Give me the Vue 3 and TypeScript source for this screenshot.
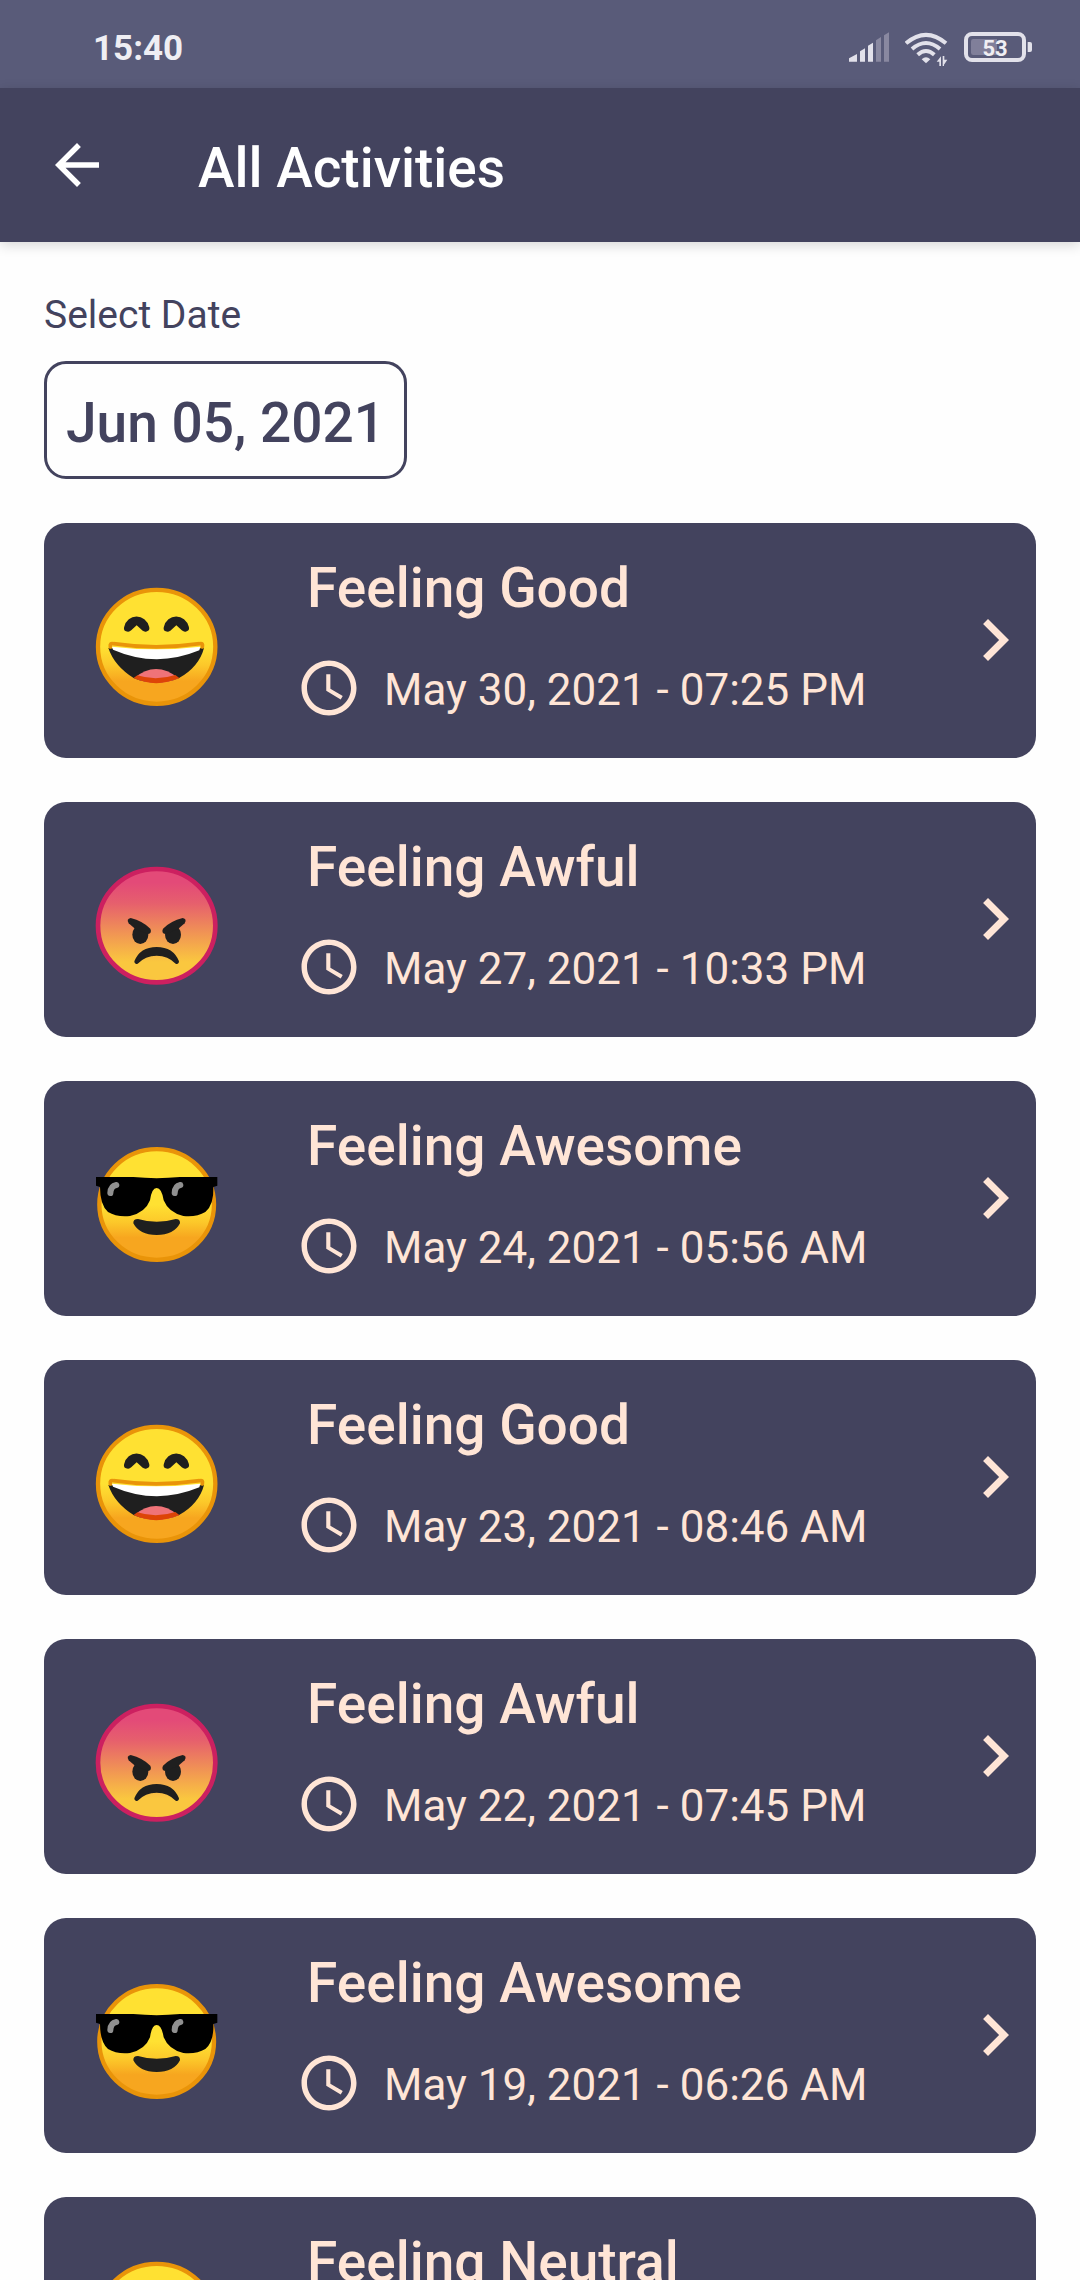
<script setup lang="ts">
type Mood = 'good' | 'awful' | 'awesome' | 'neutral'

interface Activity {
  mood: Mood
  title: string
  time: string
}

const selectedDate = 'Jun 05, 2021'

const activities: Activity[] = [
  { mood: 'good', title: 'Feeling Good', time: 'May 30, 2021 - 07:25 PM' },
  { mood: 'awful', title: 'Feeling Awful', time: 'May 27, 2021 - 10:33 PM' },
  { mood: 'awesome', title: 'Feeling Awesome', time: 'May 24, 2021 - 05:56 AM' },
  { mood: 'good', title: 'Feeling Good', time: 'May 23, 2021 - 08:46 AM' },
  { mood: 'awful', title: 'Feeling Awful', time: 'May 22, 2021 - 07:45 PM' },
  { mood: 'awesome', title: 'Feeling Awesome', time: 'May 19, 2021 - 06:26 AM' },
  { mood: 'neutral', title: 'Feeling Neutral', time: '' },
]
</script>

<template>
  <div class="app">
    <svg class="defs" width="0" height="0" aria-hidden="true">
      <defs>
        <linearGradient id="face-yellow" x1="0" y1="0" x2="0" y2="1">
          <stop offset="0.5" stop-color="#ffe132" />
          <stop offset="0.66" stop-color="#fcc82a" />
          <stop offset="0.8" stop-color="#f7a61f" />
        </linearGradient>
        <linearGradient id="face-red" x1="0" y1="0" x2="0" y2="1">
          <stop offset="0.12" stop-color="#e34a78" />
          <stop offset="0.3" stop-color="#e65f6d" />
          <stop offset="0.6" stop-color="#f29b51" />
          <stop offset="0.82" stop-color="#fac73f" />
        </linearGradient>
      </defs>
    </svg>

    <div class="status">
      <span class="clock">15:40</span>
      <div class="indicators">
        <svg class="signal" viewBox="90 96 120 88" aria-hidden="true">
          <path d="M90 184V174L114 161V184ZM123 184V153L138 144V184ZM147 184V136L162 127V184Z" fill="#e2e1ea" />
          <path d="M171 184V120L186 110V184ZM195 184V105L210 96V184Z" fill="#8988a0" />
        </svg>
        <svg class="wifi" viewBox="258 93 129 102" aria-hidden="true">
          <g fill="none" stroke="#e2e1ea" stroke-width="12">
            <path d="M261 127Q321 76 381 127" />
            <path d="M279 144Q321 108 363 144" />
            <path d="M296 161Q321 139 346 161" />
          </g>
          <path d="M308 175Q321 163 334 175L321 187Z" fill="#e2e1ea" />
          <path d="M361 195V182H353L366 166V195ZM371 195V165H376V176H385L375 191V195Z" fill="#e2e1ea" />
        </svg>
        <svg class="battery" viewBox="432 96 204 90" aria-hidden="true">
          <rect x="438" y="102" width="174" height="78" rx="18" fill="none" stroke="#e2e1ea" stroke-width="12" />
          <path d="M460 117H531V165H460Q453 165 453 158V124Q453 117 460 117Z" fill="#807f9a" />
          <path d="M623 126H630Q636 126 636 132V150Q636 156 630 156H623Z" fill="#e2e1ea" />
          <text x="525" y="167" text-anchor="middle" class="level">53</text>
        </svg>
      </div>
    </div>

    <header class="toolbar">
      <button class="back" type="button" aria-label="Back">
        <svg viewBox="0 0 24 24" aria-hidden="true">
          <path d="M20 11H7.83l5.59-5.59L12 4l-8 8 8 8 1.41-1.41L7.83 13H20v-2z" fill="#fff" />
        </svg>
      </button>
      <h1>All Activities</h1>
    </header>

    <main class="content">
      <label class="date-label" for="date">Select Date</label>
      <button id="date" class="date" type="button">{{ selectedDate }}</button>

      <ul class="list">
        <li v-for="(activity, index) in activities" :key="index">
          <button class="card" type="button">
            <svg v-if="activity.mood === 'good'" class="face" viewBox="42 48 378 366" aria-hidden="true">
              <ellipse cx="230" cy="230.500" rx="176" ry="171" fill="url(#face-yellow)" stroke="#e99409" stroke-width="13" />
              <path d="M141 172Q170 120 199 172L188 182L170 166L152 182Z" fill="#1f1f1f" />
              <path d="M260 172Q289 120 318 172L307 182L289 166L271 182Z" fill="#1f1f1f" />
              <g fill="none" stroke="#1f1f1f" stroke-width="22" stroke-linecap="round" stroke-linejoin="round">
                <path d="M143 174C150 143 189 143 197 174" />
                <path d="M262 174C269 143 308 143 316 174" />
              </g>
              <path d="M85 234Q228 248 372 234Q357 291 296 325Q228 351 162 325Q103 288 85 234Z" fill="#1f1f1f" />
              <path d="M96 230Q228 246 361 230L358 241Q228 295 99 239Z" fill="#fff" />
              <path d="M163 324Q228 270 296 325Q228 353 163 324Z" fill="#ef7378" />
              <path d="M161 324L172 316Q228 334 286 315L298 324Q228 355 161 324Z" fill="#dd4407" />
              <path d="M91 231Q89 218 100 221Q228 240 359 221Q370 218 367 231" fill="none" stroke="#e99409" stroke-width="11" stroke-linecap="round" stroke-linejoin="round" />
            </svg>
            <svg v-else-if="activity.mood === 'awful'" class="face" viewBox="42 45 378 366" aria-hidden="true">
              <ellipse cx="230" cy="227" rx="176" ry="170" fill="url(#face-red)" stroke="#cc2060" stroke-width="14" />
              <ellipse cx="181" cy="254" rx="24" ry="28" fill="#1f1f1f" />
              <ellipse cx="279" cy="254" rx="24" ry="28" fill="#1f1f1f" />
              <path d="M152 204Q188 213 211 236Q217 249 204 252L165 236L146 220Q138 207 152 204Z" fill="#1f1f1f" />
              <path d="M308 204Q272 213 249 236Q243 249 256 252L295 236L314 220Q322 207 308 204Z" fill="#1f1f1f" />
              <path d="M163 334Q180 291 230 291Q280 291 297 334Q297 345 287 341Q264 317 230 317Q196 317 173 341Q163 345 163 334Z" fill="#1f1f1f" />
            </svg>
            <svg v-else-if="activity.mood === 'awesome'" class="face" viewBox="42 42 378 366" aria-hidden="true">
              <ellipse cx="230" cy="223.500" rx="172" ry="166" fill="url(#face-yellow)" stroke="#e99409" stroke-width="13" />
              <path d="M48 141H160Q230 148 300 141H412V167L400 171Q402 225 376 246Q350 262 310 258Q266 248 251 211Q245 174 230 174Q215 174 210 211Q196 248 150 258Q110 262 84 246Q60 225 60 171L48 167Z" fill="#000" />
              <path d="M91 189Q92 168 109 165" fill="none" stroke="#909090" stroke-width="18" stroke-linecap="round" />
              <path d="M284 189Q285 168 301 165" fill="none" stroke="#909090" stroke-width="18" stroke-linecap="round" />
              <path d="M174 267Q230 284 287 267Q301 267 300 280Q282 315 230 315Q178 315 160 280Q159 267 174 267Z" fill="#1f1f1f" />
            </svg>
            <svg v-else class="face" viewBox="42 48 378 366" aria-hidden="true">
              <ellipse cx="230" cy="230.500" rx="176" ry="171" fill="url(#face-yellow)" stroke="#e99409" stroke-width="13" />
              <ellipse cx="168" cy="205" rx="22" ry="27" fill="#1f1f1f" />
              <ellipse cx="292" cy="205" rx="22" ry="27" fill="#1f1f1f" />
              <path d="M160 300H300" stroke="#1f1f1f" stroke-width="18" stroke-linecap="round" />
            </svg>

            <span class="details">
              <span class="title">{{ activity.title }}</span>
              <span class="when">
                <svg class="when-icon" viewBox="0 0 24 24" aria-hidden="true">
                  <path d="M11.990 2C6.470 2 2 6.480 2 12s4.470 10 9.990 10C17.520 22 22 17.520 22 12S17.520 2 11.990 2zM12 20c-4.420 0-8-3.580-8-8s3.580-8 8-8 8 3.580 8 8-3.580 8-8 8zm.5-13H11v6l5.250 3.150.75-1.230-4.500-2.670z" fill="#ffe5d6" />
                </svg>
                <span class="when-text">{{ activity.time }}</span>
              </span>
            </span>

            <svg class="chevron" viewBox="6 4 12 16" aria-hidden="true">
              <path d="M10 6L8.590 7.410 13.170 12l-4.580 4.590L10 18l6-6z" fill="#ffe5d6" />
            </svg>
          </button>
        </li>
      </ul>
    </main>
  </div>
</template>

<style>
body {
  margin: 0;
  background: #fefefe;
}
</style>

<style scoped>
.app {
  display: flex;
  flex-direction: column;
  height: 100vh;
  overflow: hidden;
  background: #fefefe;
  color: #43435e;
  font-family: Roboto, "Liberation Sans", sans-serif;
}

.defs {
  position: absolute;
}

button {
  margin: 0;
  border: 0;
  background: none;
  color: inherit;
  font: inherit;
  cursor: pointer;
}

.status {
  display: flex;
  flex: none;
  align-items: center;
  justify-content: space-between;
  box-sizing: border-box;
  height: 88px;
  padding: 10px 48px 0 93px;
  background: #595b79;
}

.clock {
  color: #efeef3;
  font-size: 35px;
  font-weight: 700;
  line-height: 40px;
}

.indicators {
  display: flex;
  align-items: flex-start;
  gap: 16px;
}

.signal {
  width: 40px;
  height: 30px;
}

.wifi {
  width: 43px;
  height: 34px;
}

.battery {
  width: 68px;
  height: 30px;
}

.level {
  fill: #efeef3;
  font-size: 66px;
  font-weight: 700;
}

.toolbar {
  display: flex;
  position: relative;
  z-index: 1;
  flex: none;
  align-items: center;
  gap: 88px;
  height: 154px;
  padding: 0 44px;
  background: #43435e;
  box-shadow: 0 3px 12px rgba(0, 0, 0, 0.16);
}

.back {
  padding: 0;
}

.back svg {
  display: block;
  width: 66px;
  height: 66px;
}

h1 {
  margin: 0;
  padding-top: 6px;
  color: #fff;
  font-size: 55px;
  font-weight: 500;
  line-height: 60px;
}

.content {
  display: flex;
  flex: 1;
  flex-direction: column;
  align-items: flex-start;
  min-height: 0;
  padding: 50px 44px 0;
  overflow-y: auto;
  scrollbar-width: none;
}

.date-label {
  font-size: 39px;
  line-height: 46px;
}

.date {
  margin-top: 23px;
  padding: 29px 19px 23px;
  border: 3px solid #43435e;
  border-radius: 22px;
  font-size: 55px;
  font-weight: 500;
  line-height: 60px;
}

.list {
  display: flex;
  flex-direction: column;
  align-self: stretch;
  gap: 44px;
  margin: 0;
  padding: 44px 0;
  list-style: none;
}

.card {
  display: flex;
  align-items: center;
  width: 100%;
  padding: 35px 20px 37px 50px;
  border-radius: 22px;
  background: #43435e;
  color: #ffe5d6;
  text-align: left;
}

.face {
  flex: none;
  align-self: flex-start;
  width: 126px;
  height: 122px;
  margin-top: 28px;
}

.details {
  display: flex;
  flex: 1;
  flex-direction: column;
  gap: 37px;
  margin-left: 76px;
}

.title {
  padding-left: 11px;
  font-size: 55px;
  font-weight: 500;
  line-height: 60px;
}

.when {
  display: flex;
  align-items: center;
  gap: 22px;
}

.when-icon {
  flex: none;
  width: 66px;
  height: 66px;
}

.when-text {
  padding-top: 4px;
  font-size: 44px;
  line-height: 52px;
}

.chevron {
  flex: none;
  width: 42px;
  height: 56px;
}
</style>
